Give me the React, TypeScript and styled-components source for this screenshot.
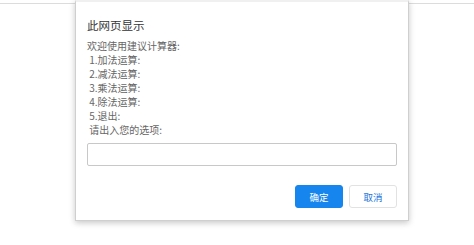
import { createGlobalStyle } from "styled-components";
import styled from "styled-components";

const GlobalStyle = createGlobalStyle`
  html, body {
    margin: 0;
    padding: 0;
    background: #ffffff;
    font-family: "Noto Sans CJK SC", "Noto Sans", "Liberation Sans", sans-serif;
  }
`;

const Page = styled.div`
  position: relative;
  width: 474px;
  height: 245px;
  overflow: hidden;
  background: #ffffff;
`;

const TopBar = styled.div`
  height: 3px;
  border-bottom: 1px solid #dcdcdc;
`;

const Dialog = styled.div`
  position: absolute;
  top: 0;
  left: 75px;
  width: 334px;
  box-sizing: border-box;
  background: #ffffff;
  border: 1px solid #cfcfcf;
  border-top: 2px solid #f0f0f0;
  box-shadow: 0 2px 6px rgba(0, 0, 0, 0.22);
  padding: 16px 11px 12px 11px;
  display: flex;
  flex-direction: column;
`;

const Title = styled.div`
  font-size: 11.5px;
  font-weight: 400;
  line-height: 14px;
  color: #333;
`;

const Message = styled.div`
  margin-top: 7px;
  font-size: 10px;
  line-height: 14px;
  color: #666;
  white-space: pre-wrap;
`;

const Input = styled.input`
  margin-top: 6px;
  height: 23px;
  box-sizing: border-box;
  border: 1px solid #c8c8c8;
  border-radius: 2px;
  outline: none;
  padding: 0 6px;
  font-size: 10px;
`;

const Actions = styled.div`
  margin-top: 19px;
  display: flex;
  justify-content: flex-end;
  gap: 6px;
`;

const Button = styled.button<{ $primary?: boolean }>`
  width: 48px;
  height: 23px;
  box-sizing: border-box;
  border-radius: 3px;
  font-family: inherit;
  font-size: 9.5px;
  padding: 0;
  cursor: pointer;
  background: ${(p) => (p.$primary ? "#1685ee" : "#ffffff")};
  color: ${(p) => (p.$primary ? "#ffffff" : "#1a73d9")};
  border: 1px solid ${(p) => (p.$primary ? "#1685ee" : "#e2e2e2")};
`;

const lines = [
  "欢迎使用建议计算器:",
  " 1.加法运算:",
  " 2.减法运算:",
  " 3.乘法运算:",
  " 4.除法运算:",
  " 5.退出:",
  " 请出入您的选项:",
];

const App = () => {
  return (
    <Page>
      <GlobalStyle />
      <TopBar />
      <Dialog>
        <Title>此网页显示</Title>
        <Message>{lines.join("\n")}</Message>
        <Input />
        <Actions>
          <Button $primary>确定</Button>
          <Button>取消</Button>
        </Actions>
      </Dialog>
    </Page>
  );
};

export default App;
